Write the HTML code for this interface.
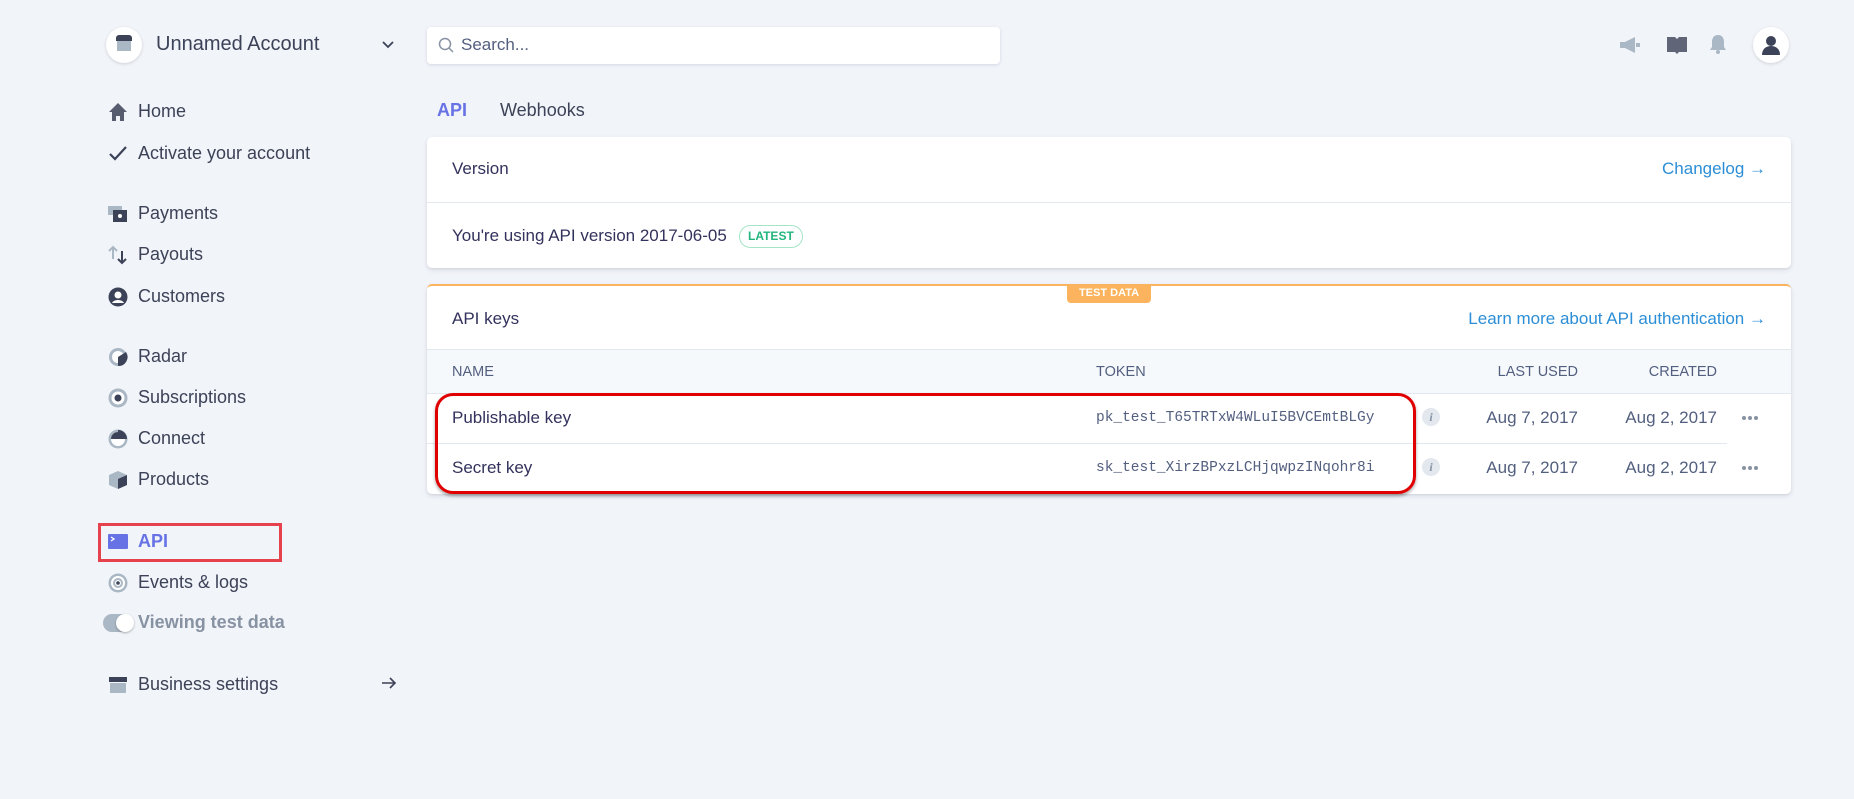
<!DOCTYPE html>
<html><head><meta charset="utf-8"><style>
*{margin:0;padding:0;box-sizing:border-box}
body{width:1854px;height:799px;background:#f1f4f9;font-family:"Liberation Sans",sans-serif;color:#32325d;position:relative;overflow:hidden}
.a{position:absolute;white-space:nowrap}
.nav{font-size:18px;color:#3c4257;left:138px}
.ic{left:108px;width:20px;height:20px}
.card{position:absolute;background:#fff;border-radius:5px;box-shadow:0 2px 5px rgba(50,50,93,.12),0 1px 2px rgba(0,0,0,.06)}
.t{font-size:17px;color:#32325d}
.link{color:#2c8ed6;font-size:17px}
.mono{font-family:"Liberation Mono",monospace;font-size:14.5px;color:#525f7f}
.hd{font-size:14.5px;color:#525f7f}
.info{width:18px;height:18px;border-radius:50%;background:#e3e8ee;color:#8792a2;font-size:12px;font-style:italic;font-weight:bold;text-align:center;line-height:18px;font-family:"Liberation Serif",serif}
.dots{position:absolute;left:1315px;width:20px;height:4px}
.dots i{position:absolute;top:0;width:4px;height:4px;border-radius:50%;background:#8792a2}
</style></head><body>
<div class="a" style="left:106px;top:27px;width:36px;height:36px;border-radius:50%;background:#fff;box-shadow:0 1px 3px rgba(0,0,0,.15)"></div>
<div class="a" style="left:116px;top:35px;width:16px;height:6px;background:#3c4257;border-radius:3px 3px 0 0"></div>
<div class="a" style="left:117px;top:41px;width:14px;height:10px;background:#aab7c4"></div>
<div class="a" style="left:156px;top:33px;font-size:20px;color:#3c4257">Unnamed Account</div>
<svg class="a" style="left:381px;top:40px" width="14" height="10"><path d="M2 2l5 5 5-5" stroke="#3c4257" stroke-width="1.8" fill="none"/></svg>
<div class="a" style="left:427px;top:27px;width:573px;height:37px;background:#fff;border-radius:4px;box-shadow:0 1px 3px rgba(50,50,93,.15)"></div>
<svg class="a" style="left:438px;top:37px" width="16" height="17"><circle cx="7" cy="7" r="5.5" stroke="#8792a2" stroke-width="1.5" fill="none"/><path d="M11 11l4 4" stroke="#8792a2" stroke-width="1.5"/></svg>
<div class="a" style="left:461px;top:35px;font-size:17px;color:#525f7f">Search...</div>
<svg class="a" style="left:1618px;top:35px" width="24" height="20"><path d="M2 7h5l10-5v16l-10-5H2z" fill="#aab7c4"/><rect x="18" y="8" width="4" height="4" fill="#aab7c4"/></svg>
<svg class="a" style="left:1665px;top:35px" width="24" height="20"><path d="M2 2h8l2 2v15l-2-2H2z M22 2h-8l-2 2v15l2-2h8z" fill="#3c4257" opacity=".8"/></svg>
<svg class="a" style="left:1708px;top:33px" width="20" height="22"><path d="M10 2c4 0 6 3 6 7v5l2 3H2l2-3V9c0-4 2-7 6-7z" fill="#aab7c4"/><circle cx="10" cy="19" r="2" fill="#aab7c4"/></svg>
<div class="a" style="left:1753px;top:27px;width:36px;height:36px;border-radius:50%;background:#fff;box-shadow:0 1px 3px rgba(0,0,0,.15)"></div>
<svg class="a" style="left:1760px;top:33px" width="22" height="24"><circle cx="11" cy="8" r="5" fill="#3c4257"/><path d="M2 22c0-6 4-9 9-9s9 3 9 9z" fill="#3c4257"/></svg>
<svg class="a ic" style="top:102px"><path d="M10 1L1 10h3v9h4v-5h4v5h4v-9h3z" fill="#3c4257" opacity=".85"/></svg>
<div class="a nav" style="top:101px">Home</div>
<svg class="a ic" style="top:144px"><path d="M2 10l5 5L18 3" stroke="#3c4257" stroke-width="2.2" fill="none"/></svg>
<div class="a nav" style="top:143px">Activate your account</div>
<svg class="a ic" style="top:204px"><rect x="0" y="2" width="14" height="9" fill="#aab7c4"/><rect x="5" y="6" width="14" height="12" fill="#3c4257"/><circle cx="12" cy="12" r="2" fill="#fff"/></svg>
<div class="a nav" style="top:203px">Payments</div>
<svg class="a ic" style="top:245px"><path d="M5 14V2M1 6l4-4 4 4" stroke="#aab7c4" stroke-width="2" fill="none"/><path d="M14 6v12M10 14l4 4 4-4" stroke="#3c4257" stroke-width="2" fill="none"/></svg>
<div class="a nav" style="top:244px">Payouts</div>
<svg class="a ic" style="top:287px"><circle cx="10" cy="10" r="9.5" fill="#3c4257"/><circle cx="10" cy="8" r="3.5" fill="#fff"/><path d="M4 16c2-4 10-4 12 0" fill="#fff"/></svg>
<div class="a nav" style="top:286px">Customers</div>
<svg class="a ic" style="top:347px"><circle cx="10" cy="10" r="9" fill="#aab7c4"/><circle cx="10" cy="10" r="6" fill="#fff"/><path d="M10 10L18 5a9 9 0 0 1-8 14z" fill="#3c4257"/></svg>
<div class="a nav" style="top:346px">Radar</div>
<svg class="a ic" style="top:388px"><circle cx="10" cy="10" r="9.5" fill="#aab7c4"/><circle cx="10" cy="10" r="6.5" fill="#fff"/><circle cx="10" cy="10" r="3.5" fill="#3c4257"/></svg>
<div class="a nav" style="top:387px">Subscriptions</div>
<svg class="a ic" style="top:429px"><circle cx="10" cy="10" r="9.5" fill="#aab7c4"/><circle cx="10" cy="10" r="7" fill="#fff"/><path d="M10 1a9 9 0 0 1 9 9h-9z M10 10H3a7 7 0 0 1 7-7z" fill="#3c4257"/></svg>
<div class="a nav" style="top:428px">Connect</div>
<svg class="a ic" style="top:470px"><path d="M10 1l9 4v10l-9 4-9-4V5z" fill="#aab7c4"/><path d="M10 9l9-4v10l-9 4z" fill="#3c4257"/></svg>
<div class="a nav" style="top:469px">Products</div>
<div class="a" style="left:98px;top:523px;width:184px;height:39px;border:3px solid #e5424d"></div>
<svg class="a ic" style="top:532px"><rect x="0" y="2" width="20" height="15" rx="1" fill="#6772e5"/><path d="M3 5l3 2-3 2" stroke="#fff" stroke-width="1.3" fill="none"/></svg>
<div class="a nav" style="top:531px;color:#6772e5;font-weight:bold">API</div>
<svg class="a ic" style="top:573px"><circle cx="10" cy="10" r="9.5" fill="#aab7c4"/><circle cx="10" cy="10" r="7" fill="#fff"/><circle cx="10" cy="10" r="5" fill="#aab7c4"/><circle cx="10" cy="10" r="3" fill="#fff"/><circle cx="10" cy="10" r="1.8" fill="#3c4257"/></svg>
<div class="a nav" style="top:572px">Events &amp; logs</div>
<div class="a" style="left:103px;top:614px;width:29px;height:18px;border-radius:9px;background:#aab7c4"></div>
<div class="a" style="left:116px;top:614px;width:18px;height:18px;border-radius:50%;background:#fff;box-shadow:0 1px 2px rgba(0,0,0,.3)"></div>
<div class="a nav" style="top:612px;color:#8792a2;font-weight:bold">Viewing test data</div>
<svg class="a ic" style="top:675px"><path d="M1 2h18v5H1z" fill="#3c4257"/><rect x="2" y="8" width="16" height="10" fill="#aab7c4"/></svg>
<div class="a nav" style="top:674px">Business settings</div>
<svg class="a" style="left:381px;top:676px" width="16" height="14"><path d="M1 7h13M9 2l5 5-5 5" stroke="#3c4257" stroke-width="1.6" fill="none"/></svg>
<div class="a" style="left:437px;top:100px;font-size:18px;color:#6772e5;font-weight:bold">API</div>
<div class="a" style="left:500px;top:100px;font-size:18px;color:#3c4257">Webhooks</div>
<div class="card" style="left:427px;top:137px;width:1364px;height:131px">
 <div class="a t" style="left:25px;top:22px">Version</div>
 <div class="a link" style="right:25px;top:22px">Changelog →</div>
 <div class="a" style="left:0;right:0;top:65px;height:1px;background:#e3e8ee"></div>
 <div class="a t" style="left:25px;top:89px">You're using API version 2017-06-05</div>
 <div class="a" style="left:312px;top:88px;height:23px;padding:0 8px;border:1px solid #a5e5c6;border-radius:12px;color:#24b47e;font-size:12px;font-weight:bold;line-height:21px">LATEST</div>
</div>
<div class="card" style="left:427px;top:284px;width:1364px;height:210px;border-top:2px solid #fbb35d;overflow:hidden">
 <div class="a" style="left:640px;top:-2px;width:84px;height:19px;background:#fbb35d;border-radius:0 0 4px 4px;color:#fff;font-size:11px;font-weight:bold;text-align:center;line-height:19px">TEST DATA</div>
 <div class="a t" style="left:25px;top:23px">API keys</div>
 <div class="a link" style="right:25px;top:23px">Learn more about API authentication →</div>
 <div class="a" style="left:0;right:0;top:63px;height:45px;background:#f6f9fc;border-top:1px solid #e3e8ee;border-bottom:1px solid #e3e8ee"></div>
 <div class="a hd" style="left:25px;top:78px">NAME</div>
 <div class="a hd" style="left:669px;top:78px">TOKEN</div>
 <div class="a hd" style="right:213px;top:78px">LAST USED</div>
 <div class="a hd" style="right:74px;top:78px">CREATED</div>
 <div class="a t" style="left:25px;top:122px">Publishable key</div>
 <div class="a mono" style="left:669px;top:124px">pk_test_T65TRTxW4WLuI5BVCEmtBLGy</div>
 <div class="a info" style="left:995px;top:122px">i</div>
 <div class="a t" style="right:213px;top:122px;color:#525f7f">Aug 7, 2017</div>
 <div class="a t" style="right:74px;top:122px;color:#525f7f">Aug 2, 2017</div>
 <div class="dots" style="top:130px"><i style="left:0"></i><i style="left:6px"></i><i style="left:12px"></i></div>
 <div class="a" style="left:0;width:1300px;top:157px;height:1px;background:#e3e8ee"></div>
 <div class="a t" style="left:25px;top:172px">Secret key</div>
 <div class="a mono" style="left:669px;top:174px">sk_test_XirzBPxzLCHjqwpzINqohr8i</div>
 <div class="a info" style="left:995px;top:172px">i</div>
 <div class="a t" style="right:213px;top:172px;color:#525f7f">Aug 7, 2017</div>
 <div class="a t" style="right:74px;top:172px;color:#525f7f">Aug 2, 2017</div>
 <div class="dots" style="top:180px"><i style="left:0"></i><i style="left:6px"></i><i style="left:12px"></i></div>
</div>
<div class="a" style="left:435px;top:393px;width:981px;height:101px;border:3px solid #e00000;border-radius:18px;box-shadow:0 2px 3px rgba(0,0,0,.35)"></div>
</body></html>
